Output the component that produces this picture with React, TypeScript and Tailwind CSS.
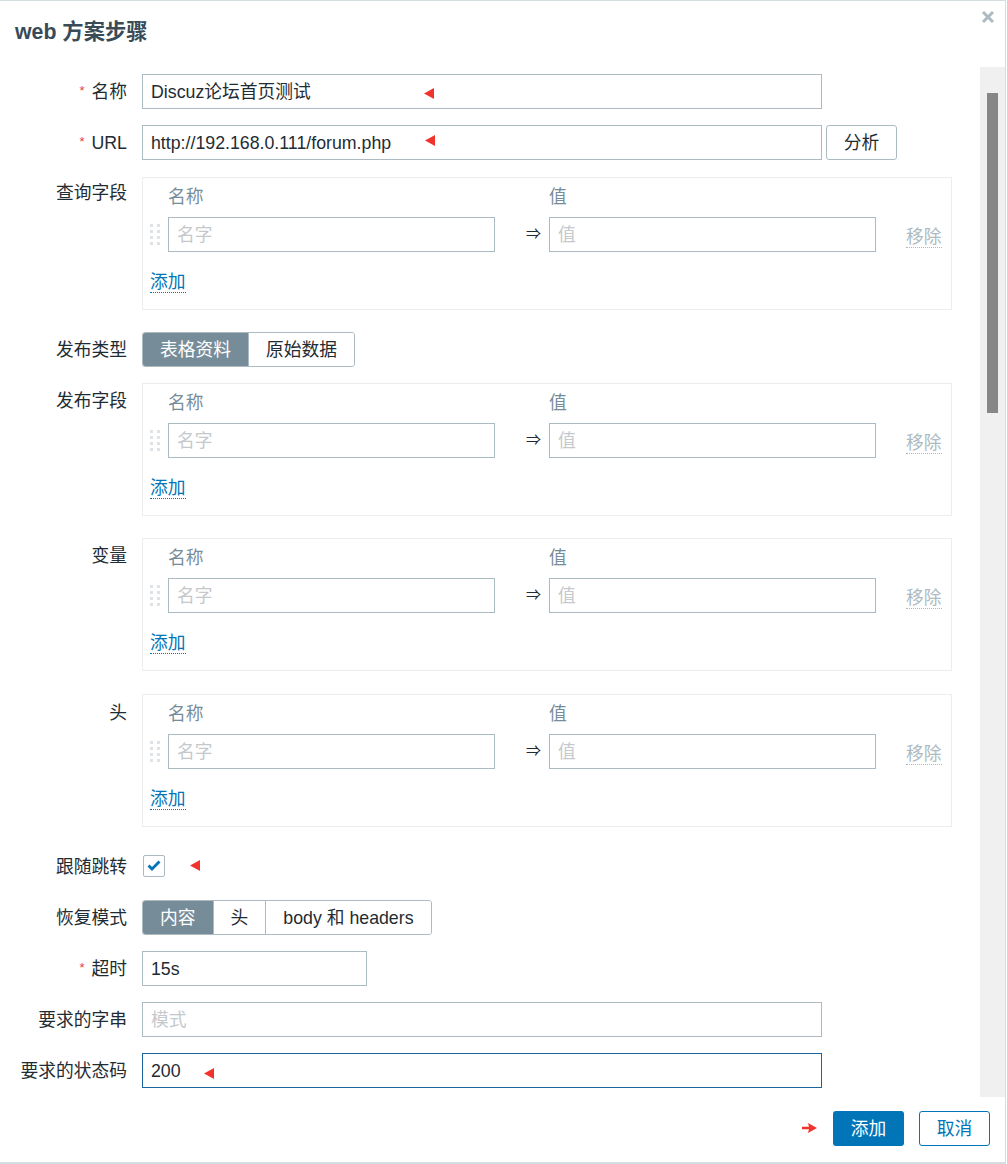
import React from "react";

const FONT = "font-['Liberation_Sans','Noto_Sans_CJK_SC',sans-serif]";

function RedArrowLeft({ className = "" }: { className?: string }) {
  return (
    <svg width="10" height="11" viewBox="0 0 10 11" className={className}>
      <polygon points="10,0 10,11 0,5.5" fill="#f2322c" />
    </svg>
  );
}

function RedArrowRight({ className = "" }: { className?: string }) {
  return (
    <svg width="15" height="10" viewBox="0 0 15 10" className={className}>
      <path d="M0 3.8 L7 3.8 L6 0 L15 5 L6 10 L7 6.2 L0 6.2 Z" fill="#f2322c" />
    </svg>
  );
}

function Label({
  children,
  required,
  pt,
}: {
  children: React.ReactNode;
  required?: boolean;
  pt?: string;
}) {
  return (
    <div
      className={
        pt
          ? `w-[127px] shrink-0 flex justify-end ${pt} leading-[20px]`
          : "w-[127px] shrink-0 flex justify-end items-center h-[35px] pt-[2px]"
      }
    >
      {required && (
        <span className="text-[#e8403c] text-[13px] mr-[7px] -mt-[4px] -ml-[1px]">*</span>
      )}
      <span>{children}</span>
    </div>
  );
}

function TextInput({
  value,
  placeholder,
  width,
  focus,
  children,
}: {
  value?: string;
  placeholder?: string;
  width: string;
  focus?: boolean;
  children?: React.ReactNode;
}) {
  return (
    <div
      className={`relative h-[35px] ${width} border ${
        focus ? "border-[#1a659e]" : "border-[#acbbc2]"
      } bg-white flex items-center px-[8px] pt-[1px]`}
    >
      {value ? (
        <span className="text-[#1f2c33] whitespace-nowrap">{value}</span>
      ) : (
        <span className="text-[#c5c9cc] whitespace-nowrap">{placeholder}</span>
      )}
      {children}
    </div>
  );
}

function DragHandle() {
  return (
    <div className="grid grid-cols-2 gap-x-[4px] gap-y-[3px] w-[10px]">
      {Array.from({ length: 8 }).map((_, i) => (
        <div key={i} className="w-[3px] h-[3px] bg-[#dde3e6]" />
      ))}
    </div>
  );
}

function PairBox() {
  return (
    <div className="w-[810px] border border-[#ebeef0] pt-[7px] pl-[7px] pb-[17px]">
      <div className="flex h-[24px] items-center text-[#768d99] pt-[1px]">
        <div className="w-[18px]" />
        <div className="w-[327px]">名称</div>
        <div className="w-[54px]" />
        <div className="w-[327px]">值</div>
      </div>
      <div className="flex h-[35px] items-center mt-[8px]">
        <div className="w-[18px] flex items-center">
          <DragHandle />
        </div>
        <TextInput placeholder="名字" width="w-[327px]" />
        <div className="w-[54px] pl-[31px] text-[15px] text-[#1f2c33]">⇒</div>
        <TextInput placeholder="值" width="w-[327px]" />
        <span className="ml-[30px] mt-[6px] text-[#acbbc2] leading-[20px] border-b border-dotted border-[#acbbc2]">
          移除
        </span>
      </div>
      <div className="mt-[17px] h-[23px]">
        <span className="inline-block leading-[20px] text-[#0275b8] border-b border-dotted border-[#0275b8]">
          添加
        </span>
      </div>
    </div>
  );
}

function Segmented({ items, active }: { items: string[]; active: number }) {
  return (
    <div className="flex h-[35px] border border-[#acbbc2] rounded-[3px] overflow-hidden">
      {items.map((it, i) => (
        <div
          key={it}
          className={`px-[17px] pt-[1px] flex items-center ${i > 0 ? "border-l border-[#acbbc2]" : ""} ${
            i === active ? "bg-[#768d99] text-white" : "bg-white text-[#1f2c33]"
          }`}
        >
          {it}
        </div>
      ))}
    </div>
  );
}

function Row({ children, className = "" }: { children: React.ReactNode; className?: string }) {
  return <div className={`flex gap-[15px] ${className}`}>{children}</div>;
}

export default function App() {
  return (
    <div
      className={`${FONT} w-[1006px] h-[1164px] bg-white border-t border-r border-b-2 border-[#d6dde0] flex flex-col text-[#1f2c33] text-[17.75px]`}
    >
      {/* Header */}
      <div className="h-[66px] shrink-0 relative flex items-center pl-[15px]">
        <h1 className="text-[21.3px] font-bold text-[#384b57] -mt-[2px]">web 方案步骤</h1>
        <button className="absolute right-[10px] top-[9px] w-[14px] h-[14px]">
          <svg viewBox="0 0 14 14" width="14" height="14">
            <path d="M2 2 L12 12 M12 2 L2 12" stroke="#acbbc2" strokeWidth="3" />
          </svg>
        </button>
      </div>

      {/* Body */}
      <div className="flex h-[1030px] shrink-0">
        <div className="flex-1 pt-[7px] flex flex-col gap-[16px]">
          <Row>
            <Label required>名称</Label>
            <TextInput value="Discuz论坛首页测试" width="w-[680px]">
              <RedArrowLeft className="absolute left-[281px] top-[13px]" />
            </TextInput>
          </Row>
          <Row>
            <Label required>URL</Label>
            <div className="flex gap-[4px]">
              <TextInput value="http://192.168.0.111/forum.php" width="w-[680px]">
                <RedArrowLeft className="absolute left-[282px] top-[9px]" />
              </TextInput>
              <button className="h-[35px] w-[71px] border border-[#acbbc2] rounded-[3px] bg-white text-[#1f2c33] pt-[1px]">
                分析
              </button>
            </div>
          </Row>
          <Row className="mt-[1px] mb-[6px]">
            <Label pt="pt-[6px]">查询字段</Label>
            <PairBox />
          </Row>
          <Row>
            <Label>发布类型</Label>
            <Segmented items={["表格资料", "原始数据"]} active={0} />
          </Row>
          <Row className="mb-[6px]">
            <Label pt="pt-[8px]">发布字段</Label>
            <PairBox />
          </Row>
          <Row className="mb-[7px]">
            <Label pt="pt-[8px]">变量</Label>
            <PairBox />
          </Row>
          <Row className="mb-[5px]">
            <Label pt="pt-[9px]">头</Label>
            <PairBox />
          </Row>
          <Row className="mt-[1px]">
            <Label>跟随跳转</Label>
            <div className="h-[35px] flex items-center">
              <div className="w-[22px] h-[22px] border border-[#acbbc2] rounded-[2px] flex items-center justify-center -mt-[2px] ml-[1px]">
                <svg width="14" height="11" viewBox="0 0 14 11">
                  <path d="M1.5 5.5 L5 9 L12.5 1.5" stroke="#0275b8" strokeWidth="2.8" fill="none" />
                </svg>
              </div>
              <RedArrowLeft className="ml-[25px] -mt-[3px]" />
            </div>
          </Row>
          <Row>
            <Label>恢复模式</Label>
            <Segmented items={["内容", "头", "body 和 headers"]} active={0} />
          </Row>
          <Row>
            <Label required>超时</Label>
            <TextInput value="15s" width="w-[225px]" />
          </Row>
          <Row>
            <Label>要求的字串</Label>
            <TextInput placeholder="模式" width="w-[680px]" />
          </Row>
          <Row>
            <Label>要求的状态码</Label>
            <TextInput value="200" width="w-[680px]" focus>
              <RedArrowLeft className="absolute left-[61px] top-[14px]" />
            </TextInput>
          </Row>
        </div>
        {/* Scrollbar */}
        <div className="w-[25px] shrink-0 bg-[#f0f0f0] pt-[26px] pl-[7px]">
          <div className="w-[11px] h-[320px] bg-[#878787]" />
        </div>
      </div>

      {/* Footer */}
      <div className="flex-1 flex items-start justify-end pt-[14px] pr-[15px]">
        <RedArrowRight className="mt-[12px] mr-[16px]" />
        <button className="h-[35px] w-[71px] rounded-[3px] bg-[#0275b8] text-white pt-[1px]">添加</button>
        <button className="h-[35px] w-[71px] ml-[15px] rounded-[3px] border border-[#0275b8] bg-white text-[#0275b8] pt-[1px]">
          取消
        </button>
      </div>
    </div>
  );
}
